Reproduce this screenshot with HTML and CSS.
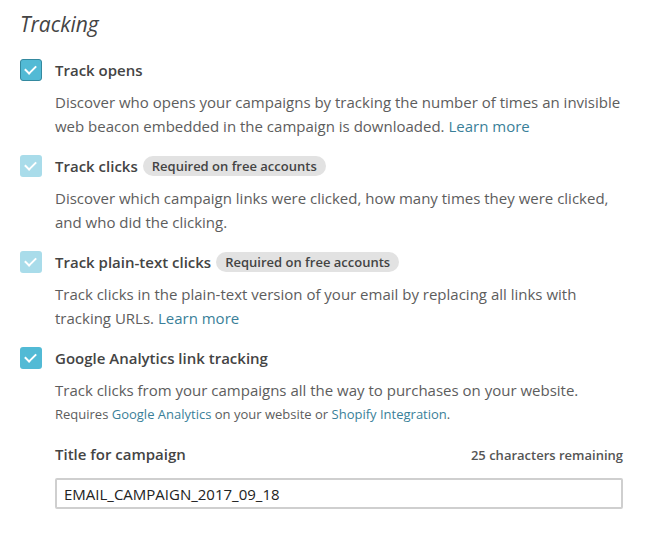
FILE: index.html
```html
<!DOCTYPE html>
<html lang="en">
<head>
    <meta charset="UTF-8">
    <title>Tracking</title>
    <link rel="stylesheet" href="styles.css">
</head>
<body>
    <div class="tracking">
        <h2>Tracking</h2>

        <div class="option">
            <label class="option-head">
                <span class="check check-focus"></span>
                <span class="option-title">Track opens</span>
            </label>
            <p class="option-desc">Discover who opens your campaigns by tracking the number of times an invisible web beacon embedded in the campaign is downloaded. <a href="#">Learn more</a></p>
        </div>

        <div class="option">
            <label class="option-head">
                <span class="check check-disabled"></span>
                <span class="option-title">Track clicks</span>
                <span class="badge">Required on free accounts</span>
            </label>
            <p class="option-desc">Discover which campaign links were clicked, how many times they were clicked, and who did the clicking.</p>
        </div>

        <div class="option">
            <label class="option-head">
                <span class="check check-disabled"></span>
                <span class="option-title">Track plain-text clicks</span>
                <span class="badge">Required on free accounts</span>
            </label>
            <p class="option-desc">Track clicks in the plain-text version of your email by replacing all links with tracking URLs. <a href="#">Learn more</a></p>
        </div>

        <div class="option">
            <label class="option-head">
                <span class="check"></span>
                <span class="option-title">Google Analytics link tracking</span>
            </label>
            <p class="option-desc">Track clicks from your campaigns all the way to purchases on your website.</p>
            <p class="option-note">Requires <a href="#">Google Analytics</a> on your website or <a href="#">Shopify Integration</a>.</p>

            <div class="field">
                <div class="field-head">
                    <label for="ga-title">Title for campaign</label>
                    <span class="field-count">25 characters remaining</span>
                </div>
                <input id="ga-title" type="text" value="EMAIL_CAMPAIGN_2017_09_18">
            </div>
        </div>
    </div>
</body>
</html>
```

FILE: styles.css
```css
body {
    font-family: 'Open Sans', 'Liberation Sans', sans-serif;
    margin: 0;
    padding: 0 20px;
    background-color: #fff;
    color: #5d5d5d;
}
h2 {
    font-size: 21px;
    font-style: italic;
    font-weight: 400;
    line-height: 30px;
    color: #444;
    margin: 9px 0 19px;
}
a {
    color: #3a7f99;
    text-decoration: none;
}
.option {
    margin-bottom: 16px;
}
.option-head {
    display: flex;
    align-items: center;
    height: 24px;
}
.check {
    width: 22px;
    height: 22px;
    box-sizing: border-box;
    border-radius: 3px;
    background-color: #52bad5;
    margin-right: 13px;
    flex-shrink: 0;
    position: relative;
}
.check::after {
    content: "";
    position: absolute;
    left: 7px;
    top: 4px;
    width: 5px;
    height: 9px;
    border: solid #fff;
    border-width: 0 2px 2px 0;
    transform: rotate(45deg);
}
.check-focus {
    border: 1px solid #34899f;
}
.check-focus::after {
    left: 6px;
    top: 3px;
}
.check-disabled {
    background-color: #a9dcea;
}
.option-title {
    font-size: 15px;
    font-weight: 600;
    color: #444;
    line-height: 24px;
}
.badge {
    margin-left: 5px;
    padding: 0 9px;
    height: 20px;
    line-height: 20px;
    border-radius: 10px;
    background-color: #e2e2e2;
    color: #444;
    font-size: 13px;
    font-weight: 600;
}
.option-desc {
    margin: 8px 0 0 35px;
    font-size: 15px;
    line-height: 24px;
}
.option-note {
    margin: 0 0 0 35px;
    font-size: 13px;
    line-height: 24px;
}
.field {
    margin: 16px 8px 0 35px;
}
.field-head {
    display: flex;
    justify-content: space-between;
    align-items: baseline;
    line-height: 24px;
    margin-bottom: 11px;
}
.field-head label {
    font-size: 15px;
    font-weight: 600;
    color: #444;
}
.field-count {
    font-size: 13px;
    font-weight: 600;
    color: #555;
}
.field input {
    display: block;
    width: 100%;
    box-sizing: border-box;
    height: 31px;
    padding: 0 7px;
    border: 2px solid #cfcfcf;
    border-radius: 2px;
    font-family: inherit;
    font-size: 15px;
    color: #222;
}
```
